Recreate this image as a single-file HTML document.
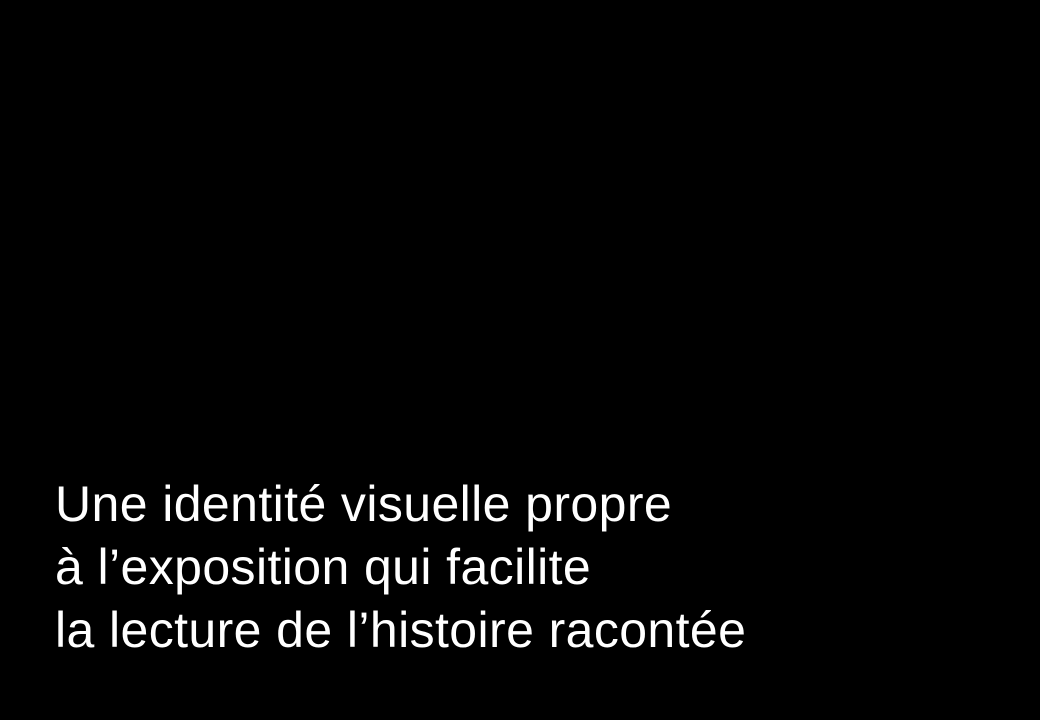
<!DOCTYPE html>
<html><head><meta charset="utf-8"><style>
html,body{margin:0;padding:0;background:#000;width:1040px;height:720px;overflow:hidden}
.t{position:absolute;left:55px;top:473px;color:#fff;font-family:"Liberation Sans",Arial,sans-serif;font-size:50px;line-height:63px;letter-spacing:0.4px;white-space:nowrap}
</style></head><body>
<div class="t">Une identité visuelle propre<br>à l’exposition qui facilite<br>la lecture de l’histoire racontée</div>
</body></html>
